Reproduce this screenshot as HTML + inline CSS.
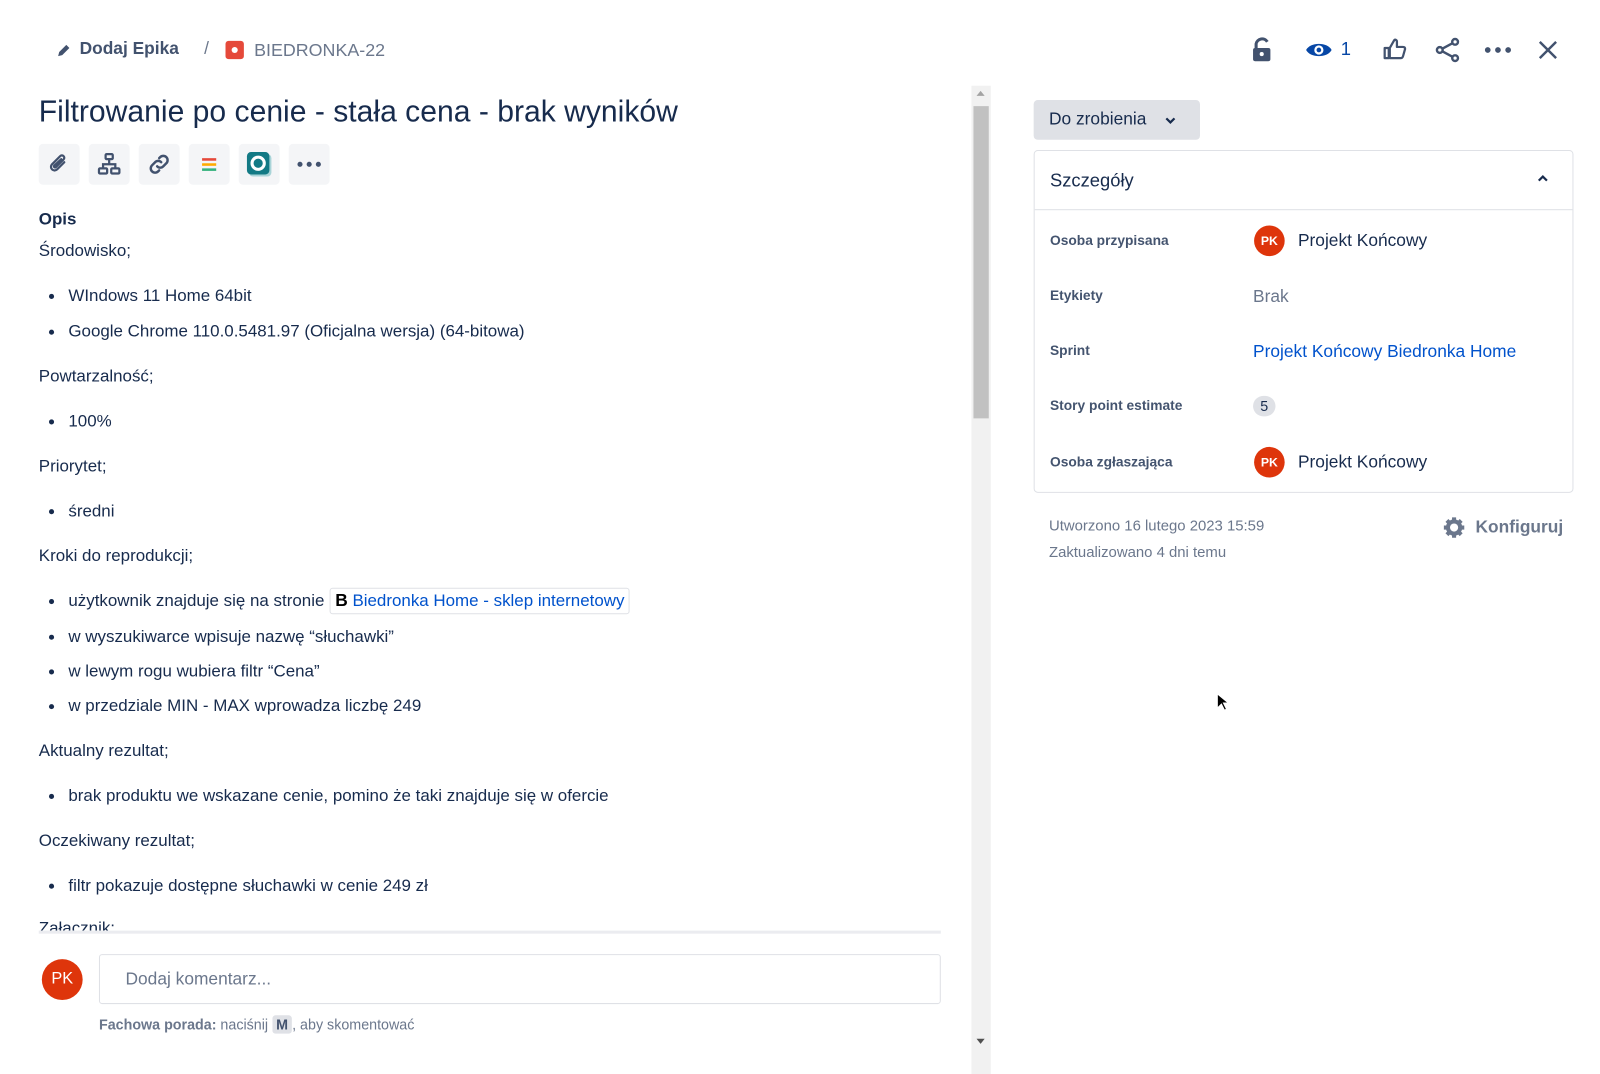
<!DOCTYPE html>
<html><head><meta charset="utf-8"><style>
*{box-sizing:border-box;margin:0;padding:0}
body{width:1600px;height:1053px;background:#fff;font-family:"Liberation Sans",sans-serif;color:#172b4d;position:relative;overflow:hidden}
#w{position:absolute;left:0;top:0;width:1568px;height:1032px;transform:scale(1.0204);transform-origin:0 0}
.a{position:absolute;white-space:nowrap}
.t{font-size:16.6px;line-height:22px;color:#172b4d}
.b::before{content:"";position:absolute;left:-19px;top:9px;width:5px;height:5px;border-radius:50%;background:#172b4d}
.tb{position:absolute;top:141px;width:40px;height:40px;background:#f4f5f7;border-radius:4px;display:flex;align-items:center;justify-content:center}
.lbl{font-size:13.5px;font-weight:bold;color:#44546f}
.av{width:30px;height:30px;border-radius:50%;background:#de350b;color:#fff;font-size:12px;font-weight:bold;display:flex;align-items:center;justify-content:center}
</style></head><body><div id="w">
<!-- header -->
<svg class="a" style="left:55px;top:41px" width="16" height="16" viewBox="0 0 16 16"><path d="M2 14l1-4 7-7 3 3-7 7z" fill="#42526e"/></svg>
<div class="a" style="left:78px;top:38px;font-size:17px;font-weight:bold;color:#42526e">Dodaj Epika</div>
<div class="a" style="left:200px;top:38px;font-size:17px;color:#6b778c">/</div>
<div class="a" style="left:221px;top:40px;width:18px;height:18px;background:#e5493a;border-radius:3px"><div style="position:absolute;left:6px;top:6px;width:6px;height:6px;border-radius:50%;background:#fff"></div></div>
<div class="a" style="left:249px;top:39px;font-size:17.5px;color:#6b778c">BIEDRONKA-22</div>

<svg class="a" style="left:1226px;top:36px" width="22" height="26" viewBox="0 0 22 26"><path d="M5 11V7a6 6 0 0 1 11-2" stroke="#42526e" stroke-width="3" fill="none"/><rect x="2" y="11" width="17" height="13" rx="2" fill="#42526e"/><circle cx="10.5" cy="17" r="2" fill="#fff"/></svg>
<svg class="a" style="left:1279px;top:38px" width="27" height="22" viewBox="0 0 27 22"><path d="M1 11C5 3 22 3 26 11C22 19 5 19 1 11z" fill="#0747a6"/><circle cx="13.5" cy="11" r="4.5" fill="#fff"/><circle cx="13.5" cy="11" r="2.3" fill="#0747a6"/></svg>
<div class="a" style="left:1314px;top:38px;font-size:18px;color:#0747a6">1</div>
<svg class="a" style="left:1355px;top:36px" width="24" height="24" viewBox="0 0 24 24"><path d="M2 11h4v10H2zM7 11l4-7c1-2 3-1 3 1v5h6c1.5 0 2 1 2 2l-2 7c-.3 1-1 2-2 2H7z" fill="none" stroke="#42526e" stroke-width="2.2" stroke-linejoin="round"/></svg>
<svg class="a" style="left:1406px;top:36px" width="26" height="26" viewBox="0 0 26 26"><g fill="none" stroke="#42526e" stroke-width="2.4"><circle cx="20" cy="5" r="2.8"/><circle cx="5" cy="13" r="2.8"/><circle cx="20" cy="21" r="2.8"/><path d="M7.5 11.7L17.5 6.3M7.5 14.3L17.5 19.7"/></g></svg>
<svg class="a" style="left:1455px;top:46px" width="26" height="6"><circle cx="3" cy="3" r="2.8" fill="#42526e"/><circle cx="13" cy="3" r="2.8" fill="#42526e"/><circle cx="23" cy="3" r="2.8" fill="#42526e"/></svg>
<svg class="a" style="left:1506px;top:38px" width="22" height="22" viewBox="0 0 22 22"><path d="M3 3l16 16M19 3L3 19" stroke="#42526e" stroke-width="2.4"/></svg>

<!-- title -->
<div class="a" style="left:38px;top:93px;font-size:29.5px;color:#172b4d">Filtrowanie po cenie - stała cena - brak wyników</div>
<div class="tb" style="left:38px"><svg width="22" height="22" viewBox="0 0 22 22"><path d="M16 9l-7 7a3.5 3.5 0 0 1-5-5l8-8a2.3 2.3 0 0 1 3.3 3.3l-7.5 7.5a1.1 1.1 0 0 1-1.6-1.6L13 6" fill="none" stroke="#42526e" stroke-width="2.2" stroke-linecap="round"/></svg></div>
<div class="tb" style="left:87px"><svg width="24" height="24" viewBox="0 0 24 24"><g fill="none" stroke="#42526e" stroke-width="2.2"><rect x="8.5" y="2" width="7" height="5" rx="1"/><rect x="2" y="16" width="8" height="5" rx="1"/><rect x="14" y="16" width="8" height="5" rx="1"/><path d="M12 7v5M6 16v-4h12v4"/></g></svg></div>
<div class="tb" style="left:136px"><svg width="24" height="24" viewBox="0 0 24 24"><g fill="none" stroke="#42526e" stroke-width="2.4" stroke-linecap="round"><path d="M10 14a4 4 0 0 0 6 0l3-3a4 4 0 0 0-6-6l-1 1"/><path d="M14 10a4 4 0 0 0-6 0l-3 3a4 4 0 0 0 6 6l1-1"/></g></svg></div>
<div class="tb" style="left:185px"><svg width="14" height="14"><rect y="1" width="14" height="2.5" fill="#e5493a"/><rect y="6" width="14" height="2.5" fill="#ffab00"/><rect y="11" width="14" height="2.5" fill="#36b37e"/></svg></div>
<div class="tb" style="left:234px"><svg width="28" height="28" viewBox="0 0 28 28"><rect x="4" y="4" width="22" height="22" rx="4" fill="#a9d4d8"/><rect x="2" y="2" width="22" height="22" rx="4" fill="#137a85"/><circle cx="13" cy="13" r="6" fill="none" stroke="#fff" stroke-width="3"/></svg></div>
<div class="tb" style="left:283px"><svg width="24" height="6"><circle cx="3" cy="3" r="2.5" fill="#42526e"/><circle cx="12" cy="3" r="2.5" fill="#42526e"/><circle cx="21" cy="3" r="2.5" fill="#42526e"/></svg></div>

<!-- description -->
<div class="a t" style="left:38px;top:204px;font-weight:bold">Opis</div>
<div class="a t" style="left:38px;top:235px">Środowisko;</div>
<div class="a t b" style="left:67px;top:279px">WIndows 11 Home 64bit</div>
<div class="a t b" style="left:67px;top:314px">Google Chrome 110.0.5481.97 (Oficjalna wersja) (64-bitowa)</div>
<div class="a t" style="left:38px;top:358px">Powtarzalność;</div>
<div class="a t b" style="left:67px;top:402px">100%</div>
<div class="a t" style="left:38px;top:446px">Priorytet;</div>
<div class="a t b" style="left:67px;top:490px">średni</div>
<div class="a t" style="left:38px;top:534px">Kroki do reprodukcji;</div>
<div class="a t b" style="left:67px;top:578px">użytkownik znajduje się na stronie <span style="display:inline-block;border:1px solid #dfe1e6;border-radius:3px;padding:0 4px 0 5px;line-height:24px;margin-top:-2px"><b style="color:#000;font-size:17px">B</b> <span style="color:#0052cc">Biedronka Home - sklep internetowy</span></span></div>
<div class="a t b" style="left:67px;top:613px">w wyszukiwarce wpisuje nazwę “słuchawki”</div>
<div class="a t b" style="left:67px;top:647px">w lewym rogu wubiera filtr “Cena”</div>
<div class="a t b" style="left:67px;top:681px">w przedziale MIN - MAX wprowadza liczbę 249</div>
<div class="a t" style="left:38px;top:725px">Aktualny rezultat;</div>
<div class="a t b" style="left:67px;top:769px">brak produktu we wskazane cenie, pomino że taki znajduje się w ofercie</div>
<div class="a t" style="left:38px;top:813px">Oczekiwany rezultat;</div>
<div class="a t b" style="left:67px;top:857px">filtr pokazuje dostępne słuchawki w cenie 249 zł</div>
<div class="a" style="left:38px;top:899px;height:13px;overflow:hidden"><div class="t">Załącznik;</div></div>
<div class="a" style="left:38px;top:912px;width:884px;height:3px;background:#ebecf0"></div>

<!-- comment -->
<div class="a av" style="left:41px;top:940px;width:40px;height:40px;font-size:16px;font-weight:normal">PK</div>
<div class="a" style="left:97px;top:935px;width:825px;height:49px;border:1px solid #dfe1e6;border-radius:3px"></div>
<div class="a" style="left:123px;top:950px;font-size:17px;color:#6b778c">Dodaj komentarz...</div>
<div class="a" style="left:97px;top:996px;font-size:14px;color:#6b778c"><b>Fachowa porada:</b> naciśnij <span style="background:#dfe1e6;border-radius:3px;padding:1px 4px;font-weight:bold;color:#42526e">M</span>, aby skomentować</div>

<!-- scrollbar -->
<div class="a" style="left:952px;top:84px;width:19px;height:969px;background:#f1f1f1"></div>
<div class="a" style="left:954px;top:104px;width:15px;height:306px;background:#c1c1c1"></div>
<div class="a" style="left:957px;top:89px;width:0;height:0;border:4px solid transparent;border-bottom:5px solid #a3a3a3;border-top:0"></div>
<div class="a" style="left:957px;top:1018px;width:0;height:0;border:4px solid transparent;border-top:5px solid #505050;border-bottom:0"></div>

<!-- right panel -->
<div class="a" style="left:1013px;top:98px;width:163px;height:39px;background:#dfe1e6;border-radius:4px"></div>
<div class="a" style="left:1028px;top:107px;font-size:17px;color:#172b4d">Do zrobienia</div>
<svg class="a" style="left:1141px;top:114px" width="12" height="8"><path d="M2 2l4 4 4-4" stroke="#172b4d" stroke-width="2.2" fill="none"/></svg>
<div class="a" style="left:1013px;top:147px;width:529px;height:336px;border:1px solid #dfe1e6;border-radius:4px"></div>
<div class="a" style="left:1014px;top:205px;width:527px;height:1px;background:#dfe1e6"></div>
<div class="a" style="left:1029px;top:167px;font-size:18px;color:#172b4d">Szczegóły</div>
<svg class="a" style="left:1506px;top:171px" width="12" height="8"><path d="M2 6l4-4 4 4" stroke="#172b4d" stroke-width="2.2" fill="none"/></svg>

<div class="a lbl" style="left:1029px;top:228px">Osoba przypisana</div>
<div class="a av" style="left:1229px;top:221px">PK</div>
<div class="a" style="left:1272px;top:226px;font-size:17px">Projekt Końcowy</div>
<div class="a lbl" style="left:1029px;top:282px">Etykiety</div>
<div class="a" style="left:1228px;top:281px;font-size:17px;color:#6b778c">Brak</div>
<div class="a lbl" style="left:1029px;top:336px">Sprint</div>
<div class="a" style="left:1228px;top:335px;font-size:17px;color:#0052cc">Projekt Końcowy Biedronka Home</div>
<div class="a lbl" style="left:1029px;top:390px">Story point estimate</div>
<div class="a" style="left:1228px;top:388px;width:22px;height:20px;border-radius:10px;background:#dfe1e6;font-size:14px;text-align:center;line-height:20px">5</div>
<div class="a lbl" style="left:1029px;top:445px">Osoba zgłaszająca</div>
<div class="a av" style="left:1229px;top:438px">PK</div>
<div class="a" style="left:1272px;top:443px;font-size:17px">Projekt Końcowy</div>

<div class="a" style="left:1028px;top:508px;font-size:14.6px;color:#6b778c">Utworzono 16 lutego 2023 15:59</div>
<div class="a" style="left:1028px;top:534px;font-size:14.6px;color:#6b778c">Zaktualizowano 4 dni temu</div>
<svg class="a" style="left:1414px;top:506px" width="22" height="22" viewBox="0 0 22 22"><g fill="#6b778c"><circle cx="11" cy="11" r="8"/><g stroke="#6b778c" stroke-width="4"><path d="M11 1v20M1 11h20M4 4l14 14M18 4L4 18"/></g></g><circle cx="11" cy="11" r="4" fill="#fff"/></svg>
<div class="a" style="left:1446px;top:507px;font-size:17px;font-weight:bold;color:#6b778c">Konfiguruj</div>
<svg class="a" style="left:1192px;top:679px" width="12" height="18" viewBox="0 0 12 18"><path d="M1 1v14l4-4 3 6 2-1-3-6h5z" fill="#000" stroke="#fff"/></svg>
</div></body></html>
